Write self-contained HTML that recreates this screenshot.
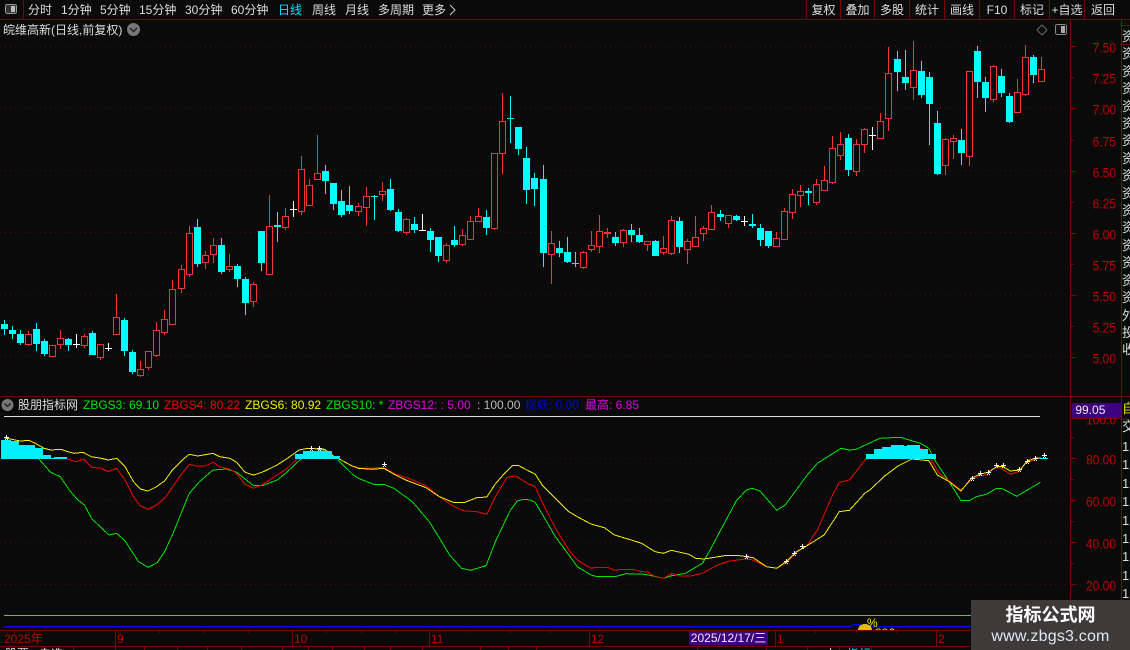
<!DOCTYPE html>
<html><head><meta charset="utf-8">
<style>
html,body{margin:0;padding:0;background:#0a0a0a}
#p{position:relative;width:1130px;height:650px;overflow:hidden;background:#0a0a0a;font:12px/14px "Liberation Sans","WenQuanYi Zen Hei","Noto Sans CJK SC",sans-serif;color:#ddd}
.t{position:absolute;white-space:nowrap}
.a{position:absolute;left:1086px;width:30px;text-align:right;color:#c00000;white-space:nowrap;transform:translateY(1px) scaleY(1.15)}
.h{top:3px}
.b{top:3px;text-align:center}
svg{position:absolute;left:0;top:0}
</style></head><body><div id="p">
<svg id="s" width="1130" height="650" shape-rendering="crispEdges">
<g stroke="#800000" fill="none">
<path d="M0 19.5H1130M0 396.5H1121M0 630.5H971M0 646.5H971M23.5 0V19M806.5 0V19M840.5 0V19M874.5 0V19M909.5 0V19M944.5 0V19M979.5 0V19M1014.5 0V19M1049.5 0V19M1084.5 0V19M1070.5 19V630M1121.5 19V600M1122 25.5H1130M1122 44.5H1130M1122 396.5H1130M1122 419.5H1130M1072 418.5H1121"/>
<path d="M1071 46.5h5M1071 77.5h3M1071 108.5h5M1071 140.5h3M1071 171.5h5M1071 202.5h3M1071 233.5h5M1071 264.5h3M1071 295.5h5M1071 326.5h3M1071 357.5h5M1071 437.5h3M1071 458.5h5M1071 479.5h3M1071 500.5h5M1071 521.5h3M1071 542.5h5M1071 563.5h3M1071 584.5h5"/>
<path d="M115.5 630V646M292.5 630V646M429.5 630V646M589.5 630V646M775.5 630V646M936.5 630V646M159.5 631v2M204.5 631v2M248.5 631v2M326.5 631v2M361.5 631v2M395.5 631v2M469.5 631v2M510.5 631v2M550.5 631v2M815.5 631v2M856.5 631v2M896.5 631v2"/>
<path d="M42.5 647v3M73.5 647v3M115.5 647v3M144.5 647v3M177.5 647v3M207.5 647v3M241.5 647v3M282.5 647v3M308.5 647v3M332.5 647v3M364.5 647v3M390.5 647v3M422.5 647v3M480.5 647v3M508.5 647v3M536.5 647v3M697.5 647v3M766.5 647v3M807.5 647v3M839.5 647v3M871.5 647v3"/>
</g>
<g stroke="#600000" stroke-dasharray="1 4" fill="none">
<path d="M0 46.5H1068M0 108.5H1068M0 170.5H1068M0 232.5H1068M0 294.5H1068M0 356.5H1068M0 458.5H1068M0 500.5H1068M0 542.5H1068M0 584.5H1068"/>
</g>
<path d="M4 416.5H1040" stroke="#ddd"/>
<path d="M4 615.5H971" stroke="#33dd33"/>
<path d="M4 626.5H850l4-2h6l4 2H971" stroke="#0000ee" fill="none" stroke-width="1.5"/>
<g id="c"></g><g id="l" fill="none"></g>
<path d="M858 630a7 6 0 0 1 14 0z" fill="#e6b800"/>
<rect x="5.5" y="4.5" width="11" height="9" rx="2" fill="#333" stroke="#999"/><rect x="11" y="6" width="4" height="6" fill="#bbb"/>
<rect x="1055.5" y="24.5" width="11" height="10" rx="2" fill="#111" stroke="#888"/><rect x="1061" y="26" width="4" height="7" fill="#aaa"/>
<path d="M1042 25l5 5-5 5-5-5z" fill="none" stroke="#666" shape-rendering="auto"/>
<g shape-rendering="auto">
<circle cx="133.500" cy="29.500" r="6.500" fill="#777"/><path d="M130 28l3.500 3.500 3.500-3.500" stroke="#222" stroke-width="1.500" fill="none"/>
<circle cx="7.500" cy="405" r="6" fill="#777"/><path d="M4.500 403.500l3 3 3-3" stroke="#222" stroke-width="1.500" fill="none"/>
</g>
</svg>
<span class="t h" style="left:28px">分时</span><span class="t h" style="left:61px">1分钟</span><span class="t h" style="left:100px">5分钟</span><span class="t h" style="left:139px">15分钟</span><span class="t h" style="left:185px">30分钟</span><span class="t h" style="left:231px">60分钟</span><span class="t h" style="left:278px;color:#00e5ff">日线</span><span class="t h" style="left:312px">周线</span><span class="t h" style="left:345px">月线</span><span class="t h" style="left:378px">多周期</span><span class="t h" style="left:422px">更多</span>
<svg width="10" height="14" style="left:449px;top:3px"><path d="M1 2l5 5-5 5" stroke="#ccc" fill="none"/></svg>
<span class="t b" style="left:807px;width:33px">复权</span><span class="t b" style="left:841px;width:33px">叠加</span><span class="t b" style="left:875px;width:34px">多股</span><span class="t b" style="left:910px;width:34px">统计</span><span class="t b" style="left:945px;width:34px">画线</span><span class="t b" style="left:980px;width:34px">F10</span><span class="t b" style="left:1015px;width:34px">标记</span><span class="t b" style="left:1050px;width:34px">+自选</span><span class="t b" style="left:1085px;width:36px">返回</span>
<span class="t" style="left:3px;top:23px">皖维高新(日线,前复权)</span>
<span class="a" style="top:40px">7.50</span><span class="a" style="top:71px">7.25</span><span class="a" style="top:102px">7.00</span><span class="a" style="top:134px">6.75</span><span class="a" style="top:165px">6.50</span><span class="a" style="top:196px">6.25</span><span class="a" style="top:227px">6.00</span><span class="a" style="top:258px">5.75</span><span class="a" style="top:289px">5.50</span><span class="a" style="top:320px">5.25</span><span class="a" style="top:351px">5.00</span>
<span class="a" style="top:412px">100.0</span>
<span class="a" style="top:452px">80.00</span><span class="a" style="top:494px">60.00</span><span class="a" style="top:536px">40.00</span><span class="a" style="top:578px">20.00</span>
<div style="position:absolute;left:1072px;top:403px;width:49px;height:15px;background:#3c0080;color:#eee;line-height:15px;white-space:nowrap">&nbsp;99.05</div>
<span class="t" style="left:18px;top:398px;color:#ddd">股朋指标网</span>
<span class="t" style="left:83px;top:398px;color:#00e600">ZBGS3: 69.10</span><span class="t" style="left:164px;top:398px;color:#f00000">ZBGS4: 80.22</span><span class="t" style="left:245px;top:398px;color:#f0f000">ZBGS6: 80.92</span><span class="t" style="left:326px;top:398px;color:#00e600">ZBGS10: *</span><span class="t" style="left:388px;top:398px;color:#e600e6">ZBGS12: : 5.00</span><span class="t" style="left:477px;top:398px;color:#bbb">: 100.00</span><span class="t" style="left:525px;top:398px;color:#0000e6">捉妖: 0.00</span><span class="t" style="left:585px;top:398px;color:#e600e6">最高: 6.85</span>
<span class="t" style="left:4px;top:632px;color:#c00000">2025年</span><span class="t" style="left:117px;top:632px;color:#c00000">9</span><span class="t" style="left:294px;top:632px;color:#c00000">10</span><span class="t" style="left:431px;top:632px;color:#c00000">11</span><span class="t" style="left:591px;top:632px;color:#c00000">12</span><span class="t" style="left:777px;top:632px;color:#c00000">1</span><span class="t" style="left:938px;top:632px;color:#c00000">2</span>
<div style="position:absolute;left:689px;top:631px;width:79px;height:14px;background:#3c0080;color:#eee;line-height:15px;text-align:center;white-space:nowrap">2025/12/17/三</div>
<span class="t" style="left:867px;top:616px;color:#f0f000">%</span>
<div style="position:absolute;left:875px;top:628px;width:20px;height:2px;overflow:hidden;color:#f0f000;line-height:10px">886</div>
<div style="position:absolute;left:5px;top:647px;width:300px;height:3px;overflow:hidden;color:#ddd;line-height:14px">股票 &nbsp; 自选</div>
<div style="position:absolute;left:825px;top:647px;width:50px;height:3px;overflow:hidden;color:#00e5ff;line-height:14px"><span style="color:#ddd">上</span>&nbsp; &nbsp;指标</div>
<div style="position:absolute;left:1122px;top:24px;width:8px;height:576px;overflow:hidden;color:#ddd;line-height:17.4px;font-size:13px">
<div style="position:absolute;top:4px">资<br>资<br>资<br>资<br>资<br>资<br>资<br>资<br>资<br>资<br>资<br>资<br>资<br>资<br>资<br>资<br>外<br>投<br>收</div>
<div style="position:absolute;top:378px;color:#e0e000;line-height:14px">自</div>
<div style="position:absolute;top:396px;line-height:14px">交</div>
<div style="position:absolute;top:414px;line-height:18.4px">1<br>1<br>1<br>1<br>1<br>1<br>1<br>1<br>1</div>
</div>
<div style="position:absolute;left:971px;top:600px;width:159px;height:50px;background:#3f3a3a;text-align:center">
<div style="font-size:18px;font-weight:bold;line-height:24px;margin-top:3px;color:#fff">指标公式网</div>
<div style="font-size:16px;line-height:20px;color:#dbe9f6;letter-spacing:.2px">www.zbgs3.com</div>
</div>
<script>
var Z=[[200,0,"c360 372 387 405;c378 390 402 417;c390 402 429 435;r393 403 431 438;c369 387 432 453;c417 423 462 468;r436 436 467 471;r390 415 431 447;c414 417 435 453;w402 433 433 444;r402 409 434 444;c393 399 465 465;r433 433 470 480;w429 444 444 453;r282 352 401 401;c354 360 453 468;c450 456 516 522;r483 508 524 531;r454 454 502 510;r366 391 464 471;r330 358 395 405;r240 268 371 371;r195 208 263 279;r78 100 221 231;c57 81 192 201;r153 166 185 207;r114 136 161 189;c114 135 216 222;r162 199 208 216;c192 198 237 261;c231 237 309 345;r246 253 302 321;c93 93 189 213;r-15 79 221 221;c36 75 81 126;r24 49 82 90;w3 27 27 51"],
[80,37,"r228 268 394 405;r297 316 374 378;r165 280 296 296;c255 273 303 342;c309 309 372 390;c330 363 405 411;c318 375 393 402;r369 379 392 408;r321 349 380 438;c345 348 351 420;r306 334 341 363;c297 327 390 393;c387 396 453 456;r414 418 455 465;c411 432 450 459;w402 451 451 453;c444 453 480 516;c471 471 528 546;r489 496 539 549;c438 480 495 501;r447 466 491 498;r408 424 476 476;r384 409 422 422;c390 411 444 465;r220 220 445 450;r39 124 220 282;c48 114 117 189;c141 141 207 225;c201 234 330 372;c279 294 327 378;c255 297 519 561;r453 490 521 612;c483 504 519 531;c471 516 546 549;c516 549 552 561"],
[120,72,"r394 397 440 447;r333 376 386 396;r285 334 377 399;r324 337 340 354;c336 351 369 378;r327 331 365 381;c312 330 345 366;c324 345 366 369;r364 364 371 393;c361 363 408 408;r348 385 395 405;r288 301 398 405;c291 303 381 399;r357 364 386 432;r288 352 377 381;r318 325 338 363;r255 277 326 326;c270 282 291 303;r286 286 308 324;c285 288 300 303;w288 304 304 318;c282 312 318 324;c312 324 360 378;c333 333 378 384;r336 355 377 381;r264 274 356 356;r207 223 275 297;r195 214 224 261;c204 213 219 255;r178 193 245 255"],
[30,102,"r408 451 479 479;r318 355 455 462;r306 343 374 390;c312 324 420 438;r327 343 422 438;r294 298 341 369;w291 316 316 360;r249 274 323 323;r51 130 263 303;c63 87 126 183;c60 141 159 180;r33 121 170 210;c93 123 195 204;c126 141 222 345;c243 279 432 435;r324 328 404 435;r315 325 332 387;c297 330 369 405;r124 124 377 408;c48 63 156 204;c141 156 204 246;r105 109 206 216;c117 138 189 201;c189 198 276 279;r147 187 245 245;r45 82 191 198;c75 81 135 159;r81 118 152 156"]];
var o="",C={r:"#ff3232",c:"#00ffff",w:"#ffffff"};
function P(i){return 4+8*i+(i>=22)+(i>=44)+(i>=67)+(i>=89)+(i>=111)}
Z.forEach(function(z){z[2].split(";").forEach(function(s,k){var t=s[0],a=s.slice(1).split(" ").map(Number),i=z[1]+k,p=P(i),f=function(v){return Math.round(z[0]+v/3)},h=f(a[0]),u=f(a[1]),b=f(a[2]),l=f(a[3]),c=C[t];
o+='<rect x="'+p+'" y="'+h+'" width="1" height="'+Math.max(1,l-h)+'" fill="'+c+'"/>';
if(t=="w")o+='<rect x="'+(p-3)+'" y="'+u+'" width="7" height="1" fill="'+c+'"/>';
else if(t=="c"){o+='<rect x="'+(p-3)+'" y="'+u+'" width="7" height="'+Math.max(1,b-u)+'" fill="'+c+'"/>'}
else{o+='<rect x="'+(p-2.5)+'" y="'+(u+.5)+'" width="6" height="'+Math.max(1,b-u)+'" fill="#0a0a0a" stroke="'+c+'"/>'}
})});
document.getElementById("c").innerHTML=o;
var A=2.958,L="";
function pl(s,off,col){var d=s.split(";").map(function(q){var a=q.split(",");return (off+a[0]/A).toFixed(1)+","+(425+a[1]/3).toFixed(1)}).join(" ");L+='<polyline points="'+d+'" stroke="'+col+'"/>'}
var G="#00e600",R="#f00000",Y="#f0f000";
pl("115,102;150,142;178,155;205,195;230,225;250,240;272,282;322,330;345,325;370,348;410,410;438,427;465,413;487,380;510,330;560,205;590,170;630,135;670,132;700,142;750,182;775,182;820,165;850,140;890,102",0,G);
pl("940,75;960,76",0,G);
pl("1000,105;1045,150;1060,160;1105,178;1135,178;1165,190;1220,230;1270,290;1300,340;1330,390;1365,430;1392,436;1438,422;1465,350;1510,255;1530,228;1550,223;1568,225",0,G);
pl("0,225;15,232;38,270;75,335;115,390;140,425;180,450;195,454;255,454;285,446;340,448;395,460;420,452;460,445;510,415;530,380;610,228;640,195;658,190;680,198;730,256;755,240;820,150;850,115;920,70;945,75;965,73;1035,40;1095,37;1155,55;1180,70;1200,110;1240,170;1275,227;1300,227;1320,215;1350,208;1380,190;1395,190;1440,214;1510,172",530,G);
pl("198,102;225,110;248,103;272,127;300,130;320,140;345,130;370,165;395,215;415,243;438,253;460,242;487,220;535,150;560,118;585,124;610,122;630,112;650,125;680,133;700,145;725,178;750,190;775,180;820,150;850,130;885,95",0,R);
pl("1000,100;1040,122;1060,128;1095,130;1135,127;1170,148;1200,157;1260,182;1300,215;1340,243;1370,257;1410,260;1440,268;1465,215;1500,157;1525,153;1568,180",0,R);
pl("0,178;15,185;38,235;75,310;115,375;140,405;180,430;195,427;230,427;250,436;270,433;305,433;320,438;350,442;370,455;395,460;420,445;440,453;475,453;510,445;555,420;590,408;640,402;660,405;700,425;730,430;760,412;785,385;820,360;850,315;895,210;915,172;945,165;995,100;1155,70;1175,85;1190,110;1210,145;1240,168;1275,195;1305,165;1330,152;1350,150;1375,128;1395,130;1420,148;1445,140;1465,115;1505,100",530,R);
pl("12,38;45,45;60,48;85,46;105,55;130,70;150,75;180,73;200,80;220,85;245,82;270,95;300,100;320,105;345,100;370,125;395,170;415,192;438,198;460,187;487,168;510,135;545,100;560,88;585,93;630,85;650,95;680,100;700,112;725,142;750,150;775,142;820,120;850,100;885,75;910,70;960,73;985,92;1005,103;1040,122;1060,130;1100,133;1135,130;1170,150;1200,165;1260,188;1300,215;1340,232;1375,232;1410,218;1440,216;1465,177;1490,148;1515,122;1535,122;1568,140",0,Y);
pl("0,140;15,147;38,183;75,220;115,260;140,275;180,297;220,308;250,330;290,342;330,355;370,380;395,385;418,376;470,388;490,400;515,402;575,392;620,392;660,398;700,425;730,430;760,408;785,382;810,368;870,330;915,260;945,256;990,205;1005,195;1050,152;1090,122;1130,102;1180,107;1205,150;1240,170;1275,198;1305,160;1330,148;1355,142;1380,125;1400,125;1420,138;1450,135;1470,108;1495,100;1510,98",530,Y);
function cy(off,a,bot){a.forEach(function(r){var x=Math.round(off+r[0]/A),w=Math.round(off+r[1]/A)-x,y=Math.round(425+r[2]/3);L+='<rect x="'+x+'" y="'+y+'" width="'+w+'" height="'+(459-y)+'" fill="#00f0ff" stroke="none"/>'})}
cy(0,[[3,33,45],[33,57,47],[57,105,60],[105,127,68],[127,151,90],[151,160,99],[160,198,96],[873,897,87],[897,982,78],[982,1005,93]]);
cy(530,[[994,1018,87],[1018,1041,72],[1041,1067,67],[1067,1105,60],[1105,1115,63],[1115,1155,60],[1155,1177,72],[1177,1201,87],[1510,1532,99]]);
function st(off,a){a.forEach(function(r){var x=Math.round(off+r[0]/A),y=Math.round(425+r[1]/3);L+='<path d="M'+(x-2)+' '+(y+.5)+'h5M'+(x+.5)+' '+(y-2)+'v4M'+(x-1)+' '+(y+2.5)+'h1M'+(x+1)+' '+(y+2.5)+'h1" stroke="#fff"/>'})}
st(0,[[19,35],[921,69],[945,69],[1137,117]]);
st(530,[[640,393],[758,407],[782,384],[806,363],[1306,159],[1330,144],[1354,141],[1378,120],[1400,120],[1447,132],[1471,108],[1495,99],[1519,90]]);
document.getElementById("l").innerHTML=L;
</script>
</div></body></html>
